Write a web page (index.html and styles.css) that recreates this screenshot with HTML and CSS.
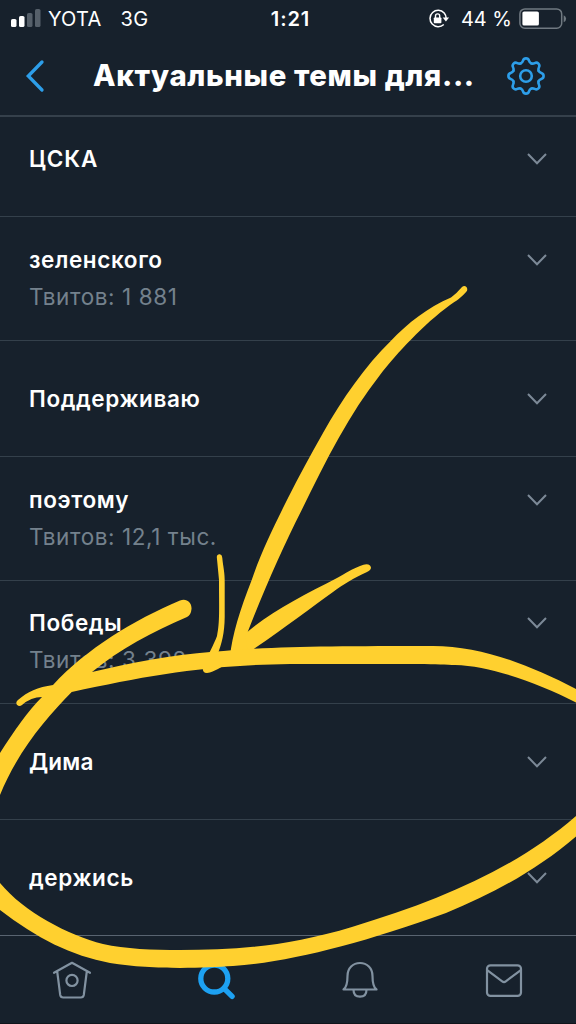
FILE: index.html
```html
<!DOCTYPE html>
<html lang="ru">
<head>
<meta charset="utf-8">
<title>Актуальные темы</title>
<link rel="stylesheet" href="styles.css">
</head>
<body>
<div class="phone">
  <div class="status">
    <div class="status-left">
      <svg class="signal" width="31" height="20" viewBox="0 0 31 20"><rect x="0" y="10" width="5.5" height="8" rx="1.6" fill="#fff"/><rect x="8" y="7" width="5.5" height="11" rx="1.6" fill="#fff"/><rect x="16" y="4" width="5.5" height="14" rx="1.6" fill="#56606a"/><rect x="24" y="0" width="5.5" height="18" rx="1.6" fill="#56606a"/></svg>
      <span class="carrier">YOTA</span>
      <span class="network">3G</span>
    </div>
    <span class="clock">1:21</span>
    <div class="status-right">
      <svg class="lock" width="22" height="20" viewBox="0 0 22 20" fill="none" stroke="#fff"><path d="M16.2 3.9A8.2 8.2 0 1 0 15.8 15.5M16.2 3.9A8.2 8.2 0 0 1 18.1 9" stroke-width="1.5"/><path d="M14.7 8.6h6.4l-3.2 4z" fill="#fff" stroke="none"/><rect x="5.8" y="8.5" width="7.6" height="5.8" rx=".8" fill="#fff" stroke="none"/><path d="M7.5 9V7a2.1 2.1 0 0 1 4.2 0v2" stroke-width="1.4"/></svg>
      <span class="percent">44 %</span>
      <svg class="battery" width="48" height="22" viewBox="0 0 48 22"><rect x=".9" y=".9" width="41.8" height="19.4" rx="5" fill="none" stroke="#707981" stroke-width="1.5"/><rect x="3.4" y="3.4" width="16.5" height="14.2" rx="1.7" fill="#fff"/><path d="M44.7 7.2q2.4 1 2.4 3.5t-2.4 3.5z" fill="#707981"/></svg>
    </div>
  </div>
  <header class="header">
    <svg class="back" width="20" height="34" viewBox="0 0 20 34"><path d="M17 3 3.3 17 17 31" fill="none" stroke="#2d9ee9" stroke-width="3.3" stroke-linecap="round"/></svg>
    <h1 class="title">Актуальные темы для...</h1>
    <svg class="gear" width="40" height="40" viewBox="-20 -20 40 40" fill="none" stroke="#2d9ee9" stroke-width="2.6" stroke-linecap="round">
      <defs><path id="tooth" d="M-5.2-12.6C-1.8-14-4.2-17.6 0-17.6S1.8-14 5.200-12.600"/></defs>
      <use href="#tooth"/><use href="#tooth" transform="rotate(45)"/><use href="#tooth" transform="rotate(90)"/><use href="#tooth" transform="rotate(135)"/><use href="#tooth" transform="rotate(180)"/><use href="#tooth" transform="rotate(225)"/><use href="#tooth" transform="rotate(270)"/><use href="#tooth" transform="rotate(315)"/>
      <circle r="5.8"/>
    </svg>
  </header>
  <main class="topics">
    <div class="topic topic-first"><div class="words"><span class="name caps">ЦСКА</span></div><svg class="chevron" viewBox="0 0 22 14"><path d="M2 2l9 9.3L20 2"/></svg></div>
    <div class="topic counted"><div class="words"><span class="name">зеленского</span><span class="count">Твитов: 1 881</span></div><svg class="chevron" viewBox="0 0 22 14"><path d="M2 2l9 9.3L20 2"/></svg></div>
    <div class="topic"><div class="words"><span class="name">Поддерживаю</span></div><svg class="chevron" viewBox="0 0 22 14"><path d="M2 2l9 9.3L20 2"/></svg></div>
    <div class="topic counted"><div class="words"><span class="name">поэтому</span><span class="count">Твитов: 12,1 тыс.</span></div><svg class="chevron" viewBox="0 0 22 14"><path d="M2 2l9 9.3L20 2"/></svg></div>
    <div class="topic counted short"><div class="words"><span class="name">Победы</span><span class="count">Твитов: 3 392</span></div><svg class="chevron" viewBox="0 0 22 14"><path d="M2 2l9 9.3L20 2"/></svg></div>
    <div class="topic"><div class="words"><span class="name tight">Дима</span></div><svg class="chevron" viewBox="0 0 22 14"><path d="M2 2l9 9.3L20 2"/></svg></div>
    <div class="topic"><div class="words"><span class="name">держись</span></div><svg class="chevron" viewBox="0 0 22 14"><path d="M2 2l9 9.3L20 2"/></svg></div>
  </main>
  <nav class="tabs">
    <svg class="tab" viewBox="-22 -22 44 44"><path d="M-18-8.2 0-18.2 18-8.2M-14.8-9.5l3 23.4q.4 2.6 3 2.6H8.8q2.6 0 3-2.6l3-23.4"/><circle r="5.6" cy="-.6"/></svg>
    <svg class="tab active" viewBox="-22 -22 44 44"><circle r="13.5" cx="-1.7" cy="-2.5"/><path d="M8.5 7.8l7.6 7.600"/></svg>
    <svg class="tab" viewBox="-22 -22 44 44"><path d="M-16.500 8.500C-13 6-12.500 0-12.500-5C-12.500-13-7-18 0-18S12.500-13 12.500-5C12.500 0 13 6 16.500 8.500zM-6.500 8.700q0 7 6.500 7t6.500-7"/></svg>
    <svg class="tab" viewBox="-22 -22 44 44"><rect x="-17" y="-15.7" width="34" height="30.6" rx="3.5"/><path d="M-16.5-10.7L-1.8.4Q0 1.7 1.8.4L16.5-10.7"/></svg>
  </nav>
  <svg class="marker" width="576" height="1024" viewBox="0 0 576 1024">
    <!-- arrow shaft -->
    <path d="M462 287C465 284 469 288 466.500 291.500C461 298 456 301 450 305C424 324 397 353 380 375C350 413 326 460 301.700 510C283 547 264 590 247.700 632L253 657H230C232 635 240 610 251.700 580C262 550 274 526 288 498C299 476 311 454 323 433C342 399 366 365 390 341.700C409 322 427 308 451 297.500Q457 293 462 287Z"/>
    <!-- arrow head -->
    <path d="M245 634C270 612 304 595 337 578C346 573 352 569 360 566Q367 563 370 565.500Q373 569 367 572C354 578 344 584 333 592C311 608 283 629 248 653Z"/>
    <path d="M216.800 557Q217 554 220 554.300Q222.300 555 222.300 558C223 566 225 573 224.700 583V617C224.500 633 222 643 217 656L229 664C221 666 215 672 207 673Q202 673 203 667C208 655 214 644 217 636C220 622 219 608 219 580Z"/>
    <!-- ring -->
    <path d="M180 600.500C187 598 192 603 191.500 609Q191 615 187 617C152 632 120 649 92 672C130 663 170 655 213 651.700C270 646.500 330 646 433 646C482 646 530 665 580 691V704.500C541 684 492 666 455 665C430 663.500 350 664 290 664C208 665 150 675 71.700 692C46 718 18 751 0 795V753C14 731 28 711 42 697Q31 697 22 705C18 708 14 703 18 700C27 692 38 687 53 685C86 649 134 620 180 600.500Z"/>
    <path d="M580 812.500C520 866 445 899 352.700 926.700C286 947 233 950 180 950C153 950 125 949 103 944C68 935 24 912 0 883V910C36 938 72 956 110 963C153 970 203 968 233 966C290 962 360 944 446 913C497 892 540 868 580 833Z"/>
  </svg>
</div>
</body>
</html>
```
FILE: styles.css
```css
body { margin: 0; background: #17212c; }
.phone {
  position: relative;
  width: 576px; height: 1024px;
  overflow: hidden;
  display: flex; flex-direction: column;
  background: #17212c; color: #fff;
  font-family: Inter, "Liberation Sans", sans-serif;
}
.status {
  height: 38px; flex: none;
  display: grid; grid-template-columns: 1fr auto 1fr; align-items: center;
  padding: 0 9px 0 11px; box-sizing: border-box;
  font-size: 20px; line-height: 38px; white-space: nowrap;
}
.status-left, .status-right { display: flex; align-items: center; }
.status-right { justify-content: flex-end; }
.carrier { margin-left: 6px; letter-spacing: .2px; }
.network { margin-left: 19px; letter-spacing: .5px; }
.clock { font-weight: 600; letter-spacing: .9px; margin-left: 3px; }
.lock { margin-right: 11px; }
.percent { margin-right: 7px; }
.header {
  height: 79px; flex: none; box-sizing: border-box;
  border-bottom: 2px solid #35404b;
  display: flex; align-items: center;
  padding: 0 30px 1px 25px;
}
.title { margin: 0 0 0 48px; font-size: 29.3px; line-height: 40px; font-weight: 800; letter-spacing: .65px; white-space: nowrap; }
.gear { margin-left: auto; margin-right: 0; }
.topics { flex: none; height: 818px; }
.topic {
  height: 116px; box-sizing: border-box;
  display: flex; justify-content: space-between; align-items: flex-start;
  padding: 42px 28px 0 29px;
  border-bottom: 1px solid #34404b;
}
.topic-first { height: 100px; padding-top: 26px; }
.counted { height: 124px; padding-top: 27px; }
.short { height: 123px; padding-top: 26px; }
.words { display: flex; flex-direction: column; }
.name { font-size: 22.5px; line-height: 32px; font-weight: 600; letter-spacing: .6px; white-space: nowrap; }
.caps { letter-spacing: .9px; }
.tight { letter-spacing: .2px; }
.count { margin-top: 5px; font-size: 22.5px; line-height: 32px; letter-spacing: .58px; color: #74818d; white-space: nowrap; }
.chevron { width: 22px; height: 14px; margin-top: 9px; fill: none; stroke: #7c8997; stroke-width: 2; }
.tabs {
  height: 89px; box-sizing: border-box; flex: none;
  padding-top: 2px;
  border-top: 1px solid #596471;
  border-bottom: 1px solid #10141b;
  display: grid; grid-template-columns: repeat(4, 1fr); justify-items: center; align-items: center;
}
.tab { width: 44px; height: 44px; fill: none; stroke: #8292a1; stroke-width: 2.2; stroke-linejoin: round; stroke-linecap: round; }
.active { stroke: #1da1f2; stroke-width: 5.3; }
.marker { position: absolute; left: 0; top: 0; fill: #ffd02f; }
```
